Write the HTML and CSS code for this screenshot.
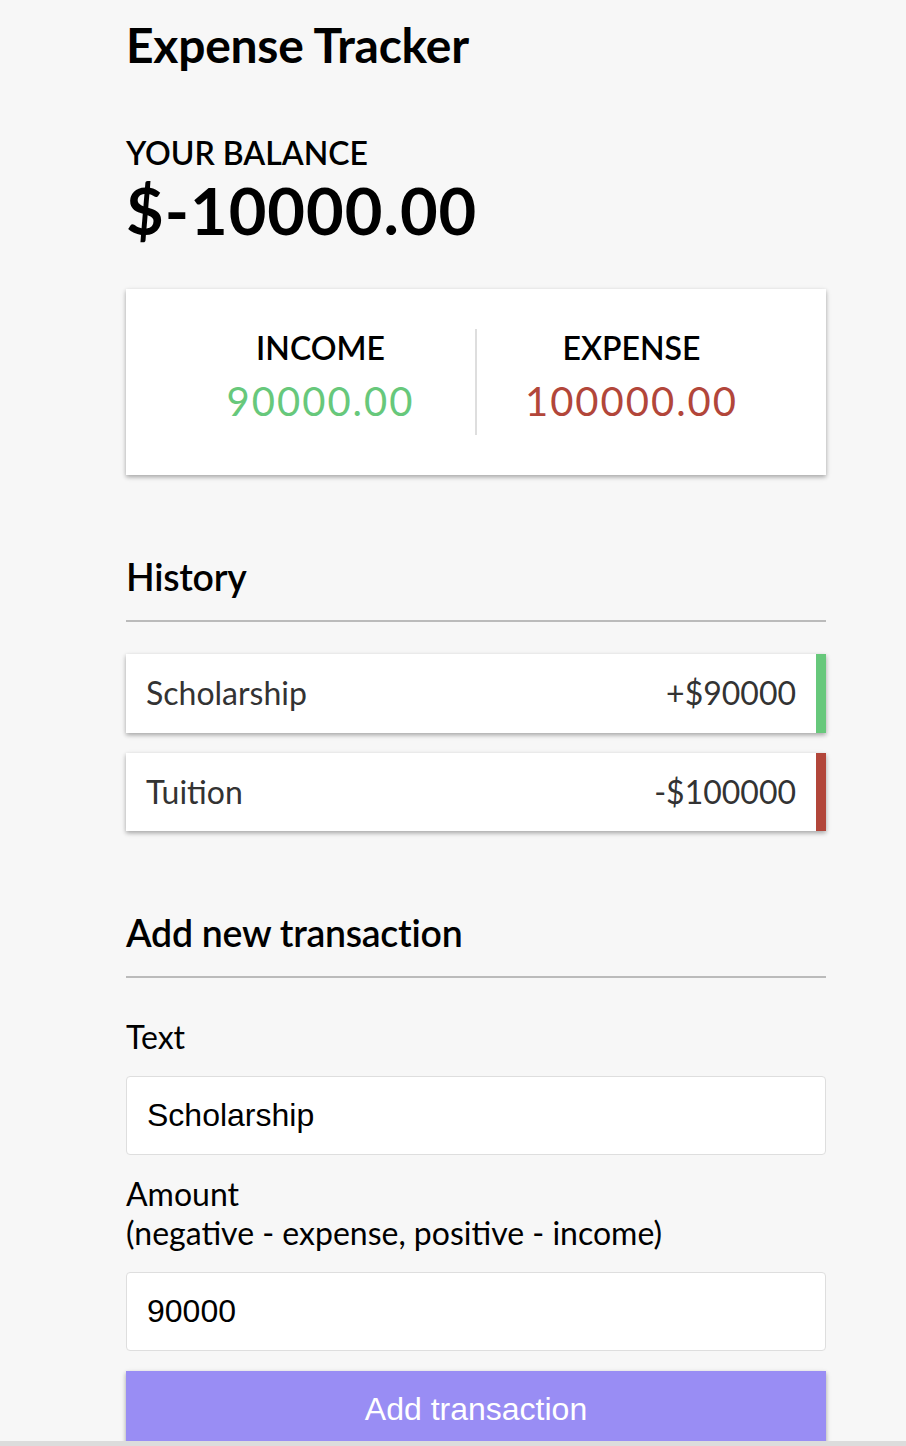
FILE: index.html
```html
<!DOCTYPE html>
<html lang="en">
<head>
<meta charset="UTF-8">
<title>Expense Tracker</title>
<link rel="stylesheet" href="styles.css">
</head>
<body>
<div class="page">
  <h2 class="title">Expense Tracker</h2>
  <div class="container">
    <h4 class="caption caption-balance">Your Balance</h4>
    <h1 class="balance">$-10000.00</h1>

    <div class="inc-exp">
      <div class="inc-exp-col inc-exp-col-first">
        <h4 class="caption">Income</h4>
        <p class="money money-plus">90000.00</p>
      </div>
      <div class="inc-exp-col">
        <h4 class="caption">Expense</h4>
        <p class="money money-minus">100000.00</p>
      </div>
    </div>

    <h3 class="section-title">History</h3>
    <ul class="list">
      <li class="list-item list-item-plus"><span>Scholarship</span><span>+$90000</span></li>
      <li class="list-item list-item-minus"><span>Tuition</span><span>-$100000</span></li>
    </ul>

    <h3 class="section-title">Add new transaction</h3>
    <form class="form">
      <div class="form-control">
        <label class="label" for="text">Text</label>
        <input class="input" type="text" id="text" value="Scholarship">
      </div>
      <div class="form-control">
        <label class="label" for="amount">Amount <br>(negative - expense, positive - income)</label>
        <input class="input" type="number" id="amount" value="90000">
      </div>
      <button class="btn" type="button">Add transaction</button>
    </form>
  </div>
</div>
<div class="window-edge"></div>
</body>
</html>
```

FILE: styles.css
```css
* { box-sizing: border-box; }

html, body {
  margin: 0;
  padding: 0;
}

body {
  background-color: #f7f7f7;
  font-family: Lato, "Open Sans", sans-serif;
  font-size: 32px;
  color: #000;
}

.page {
  width: 700px;
  margin: 0 0 0 126px;
  padding-top: 16px;
}

.title {
  margin: 0 0 59px;
  font-size: 48px;
  font-weight: 700;
  line-height: 1.2;
  letter-spacing: -0.25px;
}

.container {
  width: 700px;
}

.caption {
  margin: 0;
  font-size: 32px;
  font-weight: 600;
  text-transform: uppercase;
  line-height: 1.2;
}

.caption-balance {
  padding-top: 1px;
  margin-bottom: -1px;
}

.balance {
  margin: 0;
  font-size: 65px;
  font-weight: 700;
  letter-spacing: 1px;
  line-height: 1.2;
}

.inc-exp {
  background: #fff;
  box-shadow: 0 2px 6px rgba(0,0,0,0.12), 0 2px 4px rgba(0,0,0,0.24);
  padding: 40px;
  display: flex;
  justify-content: space-between;
  margin: 40px 0;
}

.inc-exp-col {
  flex: 1;
  text-align: center;
}

.inc-exp-col-first {
  border-right: 2px solid #dedede;
}

.money {
  font-size: 40px;
  letter-spacing: 2px;
  margin: 10px 0;
  line-height: 1.2;
}

.money-plus { color: #67c87b; }
.money-minus { color: #b2463a; }

.section-title {
  font-size: 37.44px;
  font-weight: 600;
  line-height: 1.2;
  letter-spacing: -0.25px;
  border-bottom: 2px solid #bbb;
  padding-bottom: 20px;
  margin: 80px 0 20px;
}

.list {
  list-style-type: none;
  padding: 0;
  margin: 32px 0 77px;
}

.list-item {
  background: #fff;
  box-shadow: 0 2px 6px rgba(0,0,0,0.12), 0 2px 4px rgba(0,0,0,0.24);
  color: #333;
  display: flex;
  justify-content: space-between;
  padding: 20px;
  margin: 20px 0;
  line-height: 1.2;
}

.list-item:first-child { margin-top: 0; }

.list-item-plus { border-right: 10px solid #67c87b; }
.list-item-minus { border-right: 10px solid #b2463a; }

.form-control {
  display: flex;
  flex-direction: column;
  align-items: flex-start;
}

.label {
  display: inline-block;
  margin: 20px 0;
  line-height: 1.2;
}

.input {
  display: block;
  width: 100%;
  border: 1px solid #dedede;
  border-radius: 4px;
  font-family: "Liberation Sans", Arial, sans-serif;
  font-size: 32px;
  padding: 20px;
  background: #fff;
  color: #000;
  margin: 0;
}

.input::-webkit-outer-spin-button,
.input::-webkit-inner-spin-button {
  -webkit-appearance: none;
  margin: 0;
}

.btn {
  display: block;
  width: 100%;
  background-color: #998df4;
  box-shadow: 0 2px 6px rgba(0,0,0,0.12), 0 2px 4px rgba(0,0,0,0.24);
  color: #fff;
  border: 0;
  font-family: "Liberation Sans", Arial, sans-serif;
  font-size: 32px;
  padding: 20px;
  margin: 20px 0 60px;
  line-height: 1.15;
}

.window-edge {
  position: fixed;
  left: 0;
  right: 0;
  bottom: 0;
  height: 5px;
  background: #dcdcdc;
}
```
